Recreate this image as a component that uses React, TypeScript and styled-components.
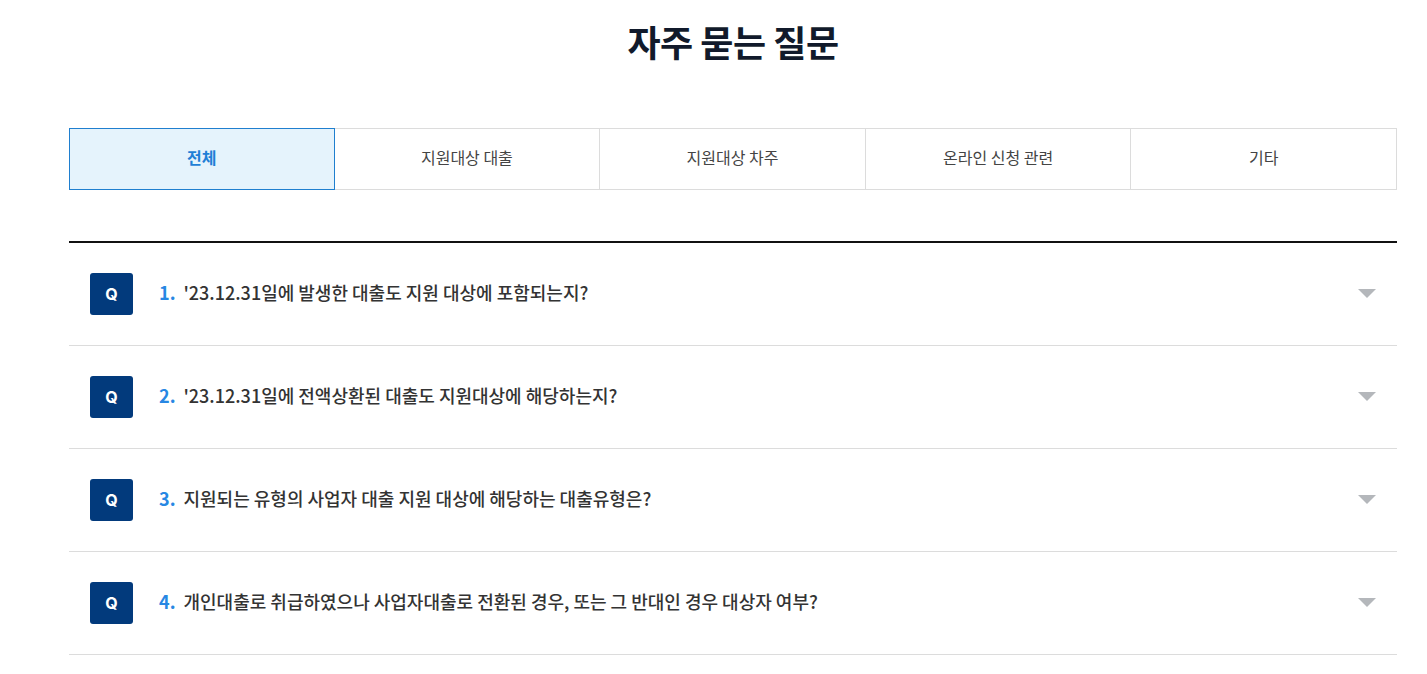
import React from "react";
import styled, { createGlobalStyle } from "styled-components";

const Global = createGlobalStyle`
  html, body { margin: 0; padding: 0; background: #fff; }
  body { font-family: "Noto Sans CJK KR", "Noto Sans", sans-serif; color: #333; }
  * { box-sizing: border-box; }
`;

const Page = styled.div`
  padding: 15px 30px 0 69px;
`;

const Title = styled.h2`
  margin: 0;
  text-align: center;
  font-size: 36px;
  line-height: 52px;
  font-weight: 700;
  color: #111a2b;
  letter-spacing: -0.5px;
`;

const Tabs = styled.ul`
  list-style: none;
  margin: 61px 0 0;
  padding: 0;
  display: grid;
  grid-template-columns: repeat(5, 1fr);
`;

const Tab = styled.li<{ $active?: boolean }>`
  height: 62px;
  display: flex;
  align-items: center;
  justify-content: center;
  padding-bottom: 5px;
  font-size: 16px;
  margin-left: -1px;
  border: 1px solid ${(p) => (p.$active ? "#1f7fcf" : "#dcdcdc")};
  background: ${(p) => (p.$active ? "#e5f3fc" : "#fff")};
  color: ${(p) => (p.$active ? "#1f7fd6" : "#444")};
  font-weight: ${(p) => (p.$active ? 700 : 400)};
  position: relative;
  z-index: ${(p) => (p.$active ? 1 : 0)};
  &:first-child { margin-left: 0; }
`;

const List = styled.ul`
  list-style: none;
  margin: 51px 0 0;
  padding: 0;
  border-top: 2px solid #111;
`;

const Row = styled.li`
  height: 103px;
  display: flex;
  align-items: center;
  padding: 0 21px 0 21px;
  border-bottom: 1px solid #dcdcdc;
`;

const Badge = styled.span`
  flex: none;
  width: 43px;
  height: 42px;
  border-radius: 3px;
  background: #023a7c;
  color: #fff;
  font-family: "Inter", "Noto Sans", sans-serif;
  font-weight: 700;
  font-size: 16px;
  display: flex;
  align-items: center;
  justify-content: center;
`;

const Question = styled.p`
  flex: 1;
  margin: 0 0 4px 26px;
  font-size: 18px;
  font-weight: 500;
  color: #333;
  letter-spacing: 0;
`;

const Num = styled.span`
  color: #2787e3;
  font-weight: 600;
  margin-right: 8px;
`;

const Arrow = styled.svg`
  flex: none;
  width: 18px;
  height: 10px;
  margin-bottom: 2px;
`;

const tabs = ["전체", "지원대상 대출", "지원대상 차주", "온라인 신청 관련", "기타"];
const questions = [
  "'23.12.31일에 발생한 대출도 지원 대상에 포함되는지?",
  "'23.12.31일에 전액상환된 대출도 지원대상에 해당하는지?",
  "지원되는 유형의 사업자 대출 지원 대상에 해당하는 대출유형은?",
  "개인대출로 취급하였으나 사업자대출로 전환된 경우, 또는 그 반대인 경우 대상자 여부?",
];

export default function App() {
  return (
    <Page>
      <Global />
      <Title>자주 묻는 질문</Title>
      <Tabs>
        {tabs.map((t, i) => (
          <Tab key={t} $active={i === 0}>
            {t}
          </Tab>
        ))}
      </Tabs>
      <List>
        {questions.map((q, i) => (
          <Row key={i}>
            <Badge>Q</Badge>
            <Question>
              <Num>{i + 1}.</Num>
              {q}
            </Question>
            <Arrow viewBox="0 0 18 10">
              <path d="M0 1h18l-9 9z" fill="#b4b7bb" />
            </Arrow>
          </Row>
        ))}
      </List>
    </Page>
  );
}
